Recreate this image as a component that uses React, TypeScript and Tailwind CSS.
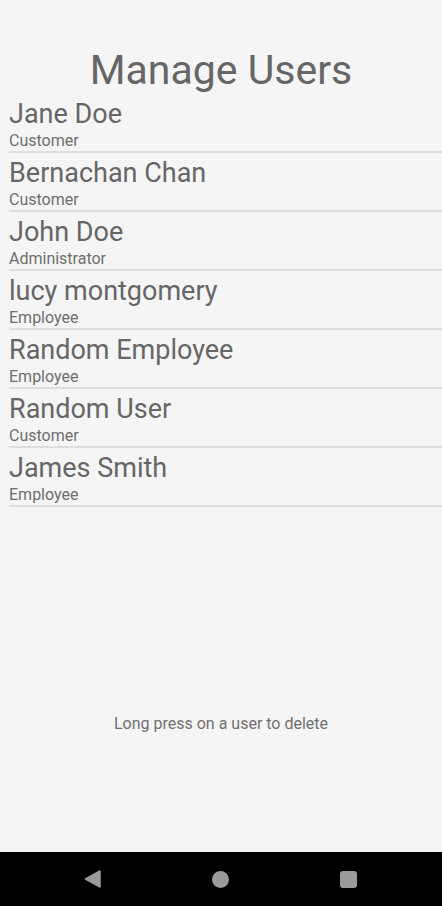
import React from "react";

const users = [
  { name: "Jane Doe", role: "Customer" },
  { name: "Bernachan Chan", role: "Customer" },
  { name: "John Doe", role: "Administrator" },
  { name: "lucy montgomery", role: "Employee" },
  { name: "Random Employee", role: "Employee" },
  { name: "Random User", role: "Customer" },
  { name: "James Smith", role: "Employee" },
];

function NavBar() {
  return (
    <div className="h-[54px] bg-black flex items-center justify-between pl-[84px] pr-[85px]">
      <svg width="17" height="18" viewBox="0 0 17 18">
        <path d="M16 1 L1.5 9 L16 17 Z" fill="#9a9a9a" stroke="#9a9a9a" strokeWidth="1.5" strokeLinejoin="round" />
      </svg>
      <div className="w-[17px] h-[17px] rounded-full bg-[#9a9a9a]" />
      <div className="w-[17px] h-[17px] rounded-[3px] bg-[#9a9a9a]" />
    </div>
  );
}

export default function App() {
  return (
    <div
      className="h-[906px] w-[442px] flex flex-col bg-[#f5f5f5] text-[#666666]"
      style={{ fontFamily: "Roboto, 'Noto Sans', sans-serif" }}
    >
      <div className="flex-1 flex flex-col">
        <h1 className="pt-[46px] text-center text-[41px] leading-[48px] font-normal">
          Manage Users
        </h1>
        <ul>
          {users.map((u) => (
            <li key={u.name} className="ml-[9px] border-b-2 border-[#dedede]">
              <div className="pt-[5px] text-[27px] leading-[30px]">{u.name}</div>
              <div className="mt-[2px] text-[16px] leading-[20px] text-[#6e6e6e]">{u.role}</div>
            </li>
          ))}
        </ul>
        <p className="mt-[207px] text-center text-[16px] leading-[20px] text-[#707070]">
          Long press on a user to delete
        </p>
      </div>
      <NavBar />
    </div>
  );
}
